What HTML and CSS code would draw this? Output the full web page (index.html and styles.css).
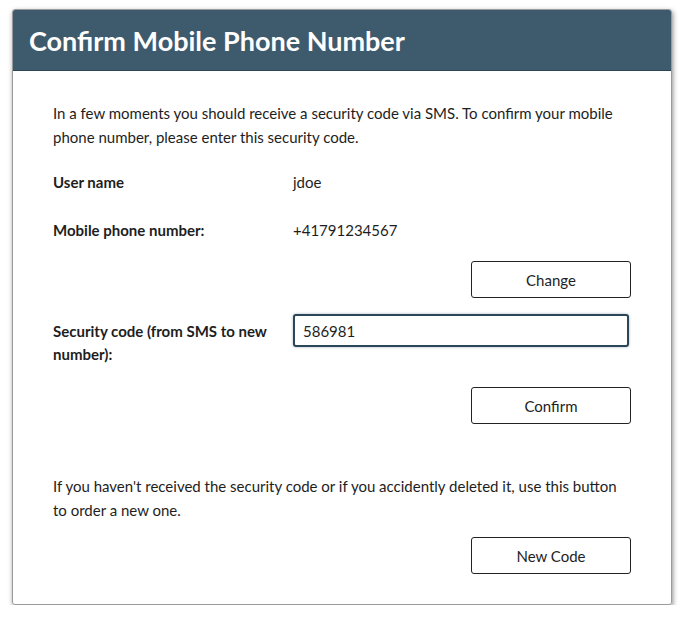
FILE: index.html
```html
<!DOCTYPE html>
<html>
<head>
<meta charset="utf-8">
<link rel="stylesheet" href="styles.css">
</head>
<body>
<div class="card">
  <div class="card-header"><h1 class="title">Confirm Mobile Phone Number</h1></div>
  <div class="card-body">
    <p class="intro">In a few moments you should receive a security code via SMS. To confirm your mobile phone number, please enter this security code.</p>
    <div class="row row-user"><div class="label">User name</div><div class="value">jdoe</div></div>
    <div class="row row-mobile"><div class="label">Mobile phone number:</div><div class="value">+41791234567</div></div>
    <div class="actions actions-change"><button class="btn">Change</button></div>
    <div class="row row-code"><label class="label label-code" for="code">Security code (from SMS to new number):</label><input id="code" class="input" type="text" value="586981"></div>
    <div class="actions actions-confirm"><button class="btn">Confirm</button></div>
    <p class="note">If you haven't received the security code or if you accidently deleted it, use this button to order a new one.</p>
    <div class="actions actions-new"><button class="btn">New Code</button></div>
  </div>
</div>
</body>
</html>
```
FILE: styles.css
```css
html, body { margin: 0; padding: 0; background: #fff; }
body {
  font-family: Lato, "Open Sans", sans-serif;
  font-size: 15px;
  color: #1e1e1e;
  padding: 9px 0 0 12px;
}
.card {
  width: 658px;
  height: 594px;
  border: 1px solid #9a9a9a;
  border-radius: 3px;
  box-shadow: 1px 2px 5px rgba(0,0,0,0.45);
  overflow: hidden;
  display: flex;
  flex-direction: column;
}
.card-header {
  background: #3e5a6d;
  height: 60px;
  border-bottom: 1px solid #2d4454;
  display: flex;
  align-items: center;
  padding-left: 16px;
}
.title {
  margin: 0;
  color: #fff;
  font-size: 27px;
  font-weight: 700;
  letter-spacing: 0;
}
.card-body { padding: 30px 40px 0 40px; }
.intro, .note { margin: 0; line-height: 24px; }
.row { display: grid; grid-template-columns: 240px 1fr; line-height: 24px; }
.label { font-weight: 700; }
.row-user { margin-top: 21px; }
.row-mobile { margin-top: 24px; }
.actions { display: flex; justify-content: flex-end; }
.btn {
  width: 160px;
  height: 37px;
  background: #fff;
  border: 1px solid #222;
  border-radius: 3px;
  font-family: inherit;
  font-size: 15px;
  color: #1e1e1e;
}
.actions-change { margin-top: 19px; }
.row-code { margin-top: 16px; align-items: start; }
.label-code { padding-top: 6px; line-height: 23px; }
.input {
  width: 336px;
  height: 33px;
  box-sizing: border-box;
  border: 2px solid #2b4658;
  border-radius: 3px;
  padding: 0 8px;
  font-family: inherit;
  font-size: 15px;
  color: #1e1e1e;
  box-shadow: 0 0 3px rgba(43,70,88,0.4);
}
.actions-confirm { margin-top: 21px; }
.note { margin-top: 50px; }
.actions-new { margin-top: 15px; }
```
